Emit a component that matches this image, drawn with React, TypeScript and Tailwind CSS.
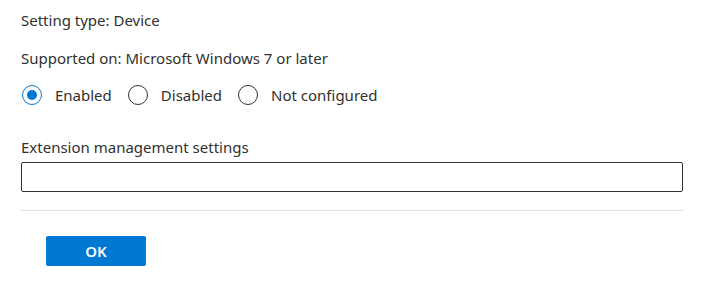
import React, { useState } from "react";

const options = ["Enabled", "Disabled", "Not configured"];

function Radio({ label, checked, onClick }: { label: string; checked: boolean; onClick: () => void }) {
  return (
    <button type="button" onClick={onClick} className="flex items-center h-[22px] gap-[13px] mr-[16px] cursor-pointer">
      <span
        className={`w-[20px] h-[20px] rounded-full border flex items-center justify-center ${
          checked ? "border-[#0078d4]" : "border-[#323130]"
        }`}
      >
        {checked && <span className="w-[10px] h-[10px] rounded-full bg-[#0078d4]" />}
      </span>
      <span className="text-[15px] leading-[20px] text-[#323130]">{label}</span>
    </button>
  );
}

export default function App() {
  const [selected, setSelected] = useState("Enabled");
  const [value, setValue] = useState("");

  return (
    <div className="w-[705px] h-[287px] bg-white px-[21px] pt-[10px] text-[#323130]" style={{ fontFamily: '"Segoe UI", "Noto Sans", sans-serif' }}>
      <p className="text-[15px] leading-[20px]">Setting type: Device</p>
      <p className="text-[15px] leading-[20px] mt-[18px]">Supported on: Microsoft Windows 7 or later</p>
      <div className="flex items-center mt-[16px] ml-[1px]">
        {options.map((o) => (
          <Radio key={o} label={o} checked={selected === o} onClick={() => setSelected(o)} />
        ))}
      </div>

      <label className="block text-[15px] leading-[20px] mt-[31px]">Extension management settings</label>
      <input
        value={value}
        onChange={(e) => setValue(e.target.value)}
        className="block w-[662px] h-[30px] mt-[5px] border border-[#323130] rounded-[2px] px-2 text-[14px] outline-none"
      />

      <div className="w-[662px] h-px bg-[#e1dfdd] mt-[18px]" />

      <button
        type="button"
        className="mt-[25px] ml-[25px] w-[100px] h-[30px] rounded-[2px] bg-[#0078d4] text-white text-[15px] font-semibold"
      >
        OK
      </button>
    </div>
  );
}
